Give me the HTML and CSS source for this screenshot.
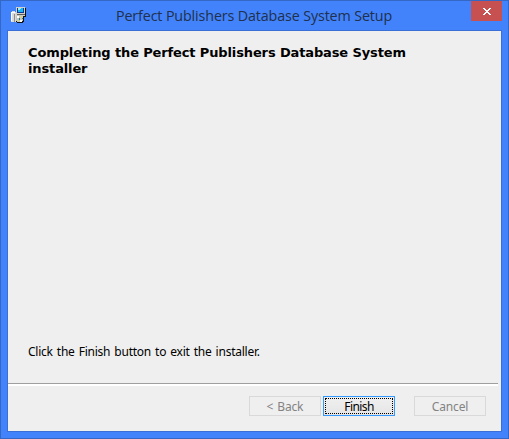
FILE: index.html
```html
<!DOCTYPE html>
<html lang="en">
<head>
<meta charset="utf-8">
<title>Perfect Publishers Database System Setup</title>
<link rel="stylesheet" href="styles.css">
</head>
<body>
<div class="window">
  <header class="titlebar">
    <svg class="app-icon" width="16" height="16" viewBox="0 0 16 16" shape-rendering="crispEdges">
      <path fill="#111" d="M14 1h1v9h-2v5h-1v1H6v-1H1v-1h4V9h9z"/>
      <path fill="#d4d0c8" d="M5 0h9v9H5z"/>
      <path fill="#083b9c" d="M6 1h7v5H6z"/>
      <path fill="#16b8f5" d="M7 1h5v4H7z"/>
      <path fill="#9eeaff" d="M7 1h3v1H9v1H7z"/>
      <path fill="#5c5c58" d="M6 7h8v1H6z"/>
      <path fill="#d9d9d9" d="M1 4h3v1h1v10H0V5h1z"/>
      <path fill="#fff" d="M1 5h3v1H1v8H0V5z"/>
      <path fill="#8d8d8d" d="M3 7h1v8H3z"/>
      <path fill="#c4c8c4" d="M6 8h5v1h1v5h-1v1H6v-1H5V9h1z"/>
      <path fill="#fff" d="M6 9h2v2H6zM9 13h2v2H9z"/>
      <path fill="#e4d85c" d="M9 9h1v2H9zM6 13h2v1H6z"/>
      <path fill="#267b80" d="M8 11h1v2H8zM11 11h1v1h-1z"/>
    </svg>
    <h1 class="title">Perfect Publishers Database System Setup</h1>
    <div class="close" role="button" aria-label="Close">
      <svg width="8" height="7" viewBox="0 0 8 7" shape-rendering="crispEdges">
        <path fill="#fff" d="M0 0h2v1h1v1h2V1h1V0h2v1H7v1H6v1H5v1h1v1h1v1h1v1H6V6H5V5H3v1H2v1H0V6h1V5h1V4h1V3H2V2H1V1H0z"/>
      </svg>
    </div>
  </header>
  <main class="content">
    <section class="page">
      <h2 class="heading">Completing the Perfect Publishers Database System<br>installer</h2>
      <p class="message">Click the Finish button to exit the installer.</p>
    </section>
    <footer class="actions">
      <button class="button" disabled>&lt; Back</button>
      <button class="button primary"><span class="focus">Finish</span></button>
      <button class="button cancel" disabled>Cancel</button>
    </footer>
  </main>
</div>
</body>
</html>
```
FILE: styles.css
```css
* { box-sizing: border-box; }
body { margin: 0; overflow: hidden; }
.window {
  display: flex;
  flex-direction: column;
  width: 509px;
  height: 439px;
  padding: 0 6px 6px;
  border: 1px solid #3568c4;
  background: #4283fb;
}
.titlebar {
  display: flex;
  height: 29px;
  flex: none;
}
.app-icon { flex: none; margin: 6px 0 0 4px; }
.title {
  flex: 1;
  margin: 0 0 0 10px;
  padding-top: 5px;
  font: 400 14.3px/19px "Open Sans", "Noto Sans", sans-serif;
  letter-spacing: -0.13px;
  color: #20304d;
  text-align: center;
  white-space: nowrap;
}
.close {
  display: flex;
  align-items: center;
  justify-content: center;
  flex: none;
  width: 31px;
  height: 20px;
  background: #c75050;
}
.content {
  flex: 1;
  display: flex;
  flex-direction: column;
  border: 1px solid #3a6fd8;
  background: #efefef;
}
.page {
  flex: 1;
  display: flex;
  flex-direction: column;
  justify-content: space-between;
  padding: 14px 20px 23px;
}
.heading {
  margin: 0;
  font: 700 13px/16px "DejaVu Sans", sans-serif;
  letter-spacing: -0.13px;
  color: #000;
  white-space: nowrap;
}
.message {
  margin: 0;
  font: 400 12px/16px "Noto Sans", sans-serif;
  letter-spacing: -0.24px;
  word-spacing: 1.2px;
  color: #000;
}
.actions {
  position: relative;
  display: flex;
  justify-content: flex-end;
  height: 48px;
  padding: 13px 15px 0 0;
}
.actions::before {
  content: "";
  position: absolute;
  inset: 0 3px auto 0;
  height: 2px;
  border-top: 1px solid #9f9f9f;
  background: #fff;
}
.button {
  width: 72px;
  height: 20px;
  padding: 1px 0 0;
  border: 1px solid #d9d9d9;
  background: #efefef;
  color: #838383;
  font: 400 12px/17px "Noto Sans", sans-serif;
  letter-spacing: -0.15px;
  word-spacing: 1px;
}
.primary {
  margin-left: 2px;
  padding: 1px;
  border-color: #3399ff;
  background: linear-gradient(#f0f0f0, #e5e5e5);
  color: #000;
  letter-spacing: -0.6px;
}
.focus {
  display: block;
  height: 16px;
  padding-top: 1px;
  border: 1px dotted #000;
  line-height: 14px;
}
.cancel { margin-left: 19px; }
```
